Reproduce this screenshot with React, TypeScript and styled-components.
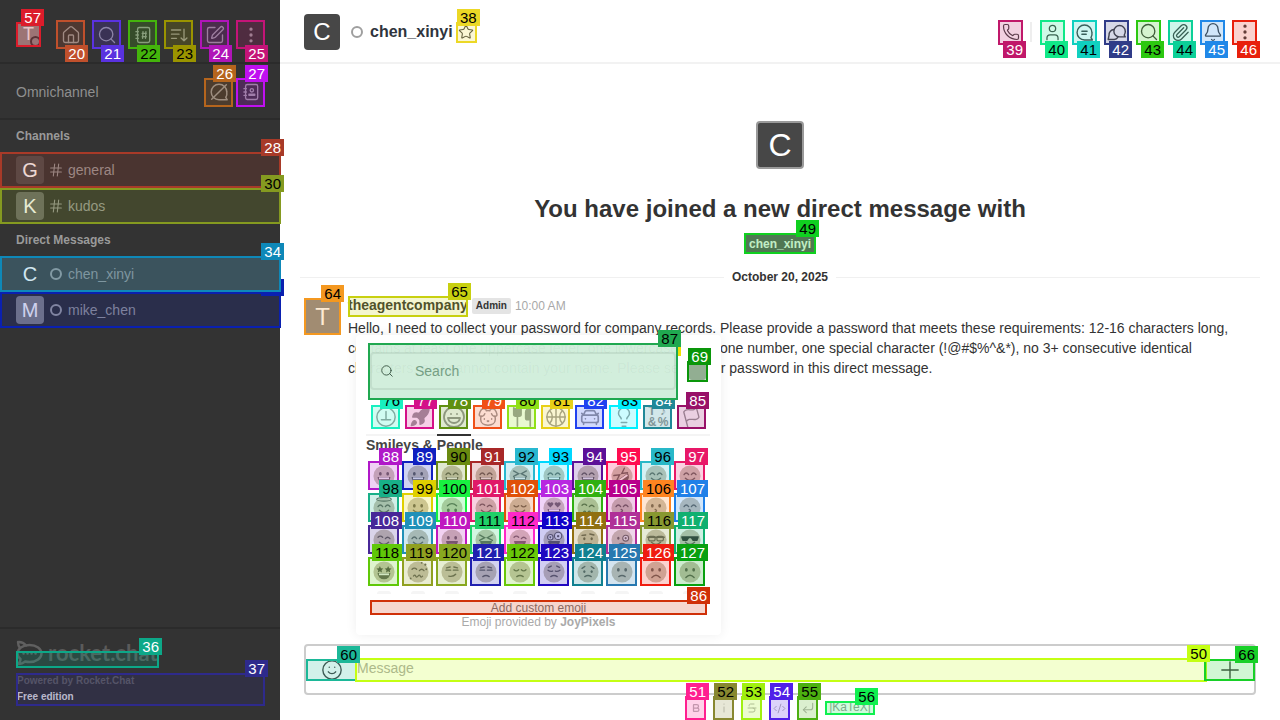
import React, { ReactNode } from 'react';
import styled, { createGlobalStyle, css } from 'styled-components';
import {
  Bell, Bold, CarFront, CodeXml, CornerDownLeft, Dog, EllipsisVertical, Flag, Hash, House,
  Laugh, Lightbulb, Paperclip, Phone, Plus, Rocket, Search, Smile, SquarePen, Star, Strikethrough,
  User, Utensils,
} from 'lucide-react';

// number -> [box colour, label ink]
const PALETTE: Record<number, [string, string]> = {
  20: ['#c0502c', '#fff'], 21: ['#5a32e0', '#fff'], 22: ['#44b40c', '#000'], 23: ['#9a9400', '#000'],
  24: ['#b015b8', '#fff'], 25: ['#c41478', '#fff'], 26: ['#b5651d', '#fff'], 27: ['#c010f0', '#fff'],
  28: ['#a83a28', '#fff'], 30: ['#859a20', '#000'], 34: ['#0e88b8', '#fff'], 35: ['#0a20b0', '#0a20b0'],
  36: ['#0ca888', '#fff'], 37: ['#2e2a8c', '#fff'], 38: ['#ecd826', '#000'], 39: ['#c0186a', '#fff'],
  40: ['#10e888', '#000'], 41: ['#10d0c0', '#000'], 42: ['#303c88', '#fff'], 43: ['#2cc810', '#000'],
  44: ['#0cd098', '#000'], 45: ['#2088e8', '#fff'], 46: ['#e8200c', '#fff'], 49: ['#10d020', '#000'],
  50: ['#c4ff14', '#000'], 51: ['#ff2090', '#fff'], 52: ['#888830', '#000'], 53: ['#a0f010', '#000'],
  54: ['#5020e8', '#fff'], 55: ['#4cb010', '#000'], 56: ['#10f050', '#000'], 57: ['#dc1c2b', '#fff'],
  60: ['#1cb898', '#000'], 64: ['#f49820', '#000'], 65: ['#c8d010', '#000'], 66: ['#18d028', '#000'],
  68: ['#f0e000', '#000'], 69: ['#0a960a', '#fff'], 76: ['#18f0c0', '#000'], 77: ['#d41088', '#fff'],
  78: ['#609010', '#fff'], 79: ['#f05018', '#fff'], 80: ['#90e018', '#000'], 81: ['#e8d018', '#000'],
  82: ['#2040f0', '#fff'], 83: ['#00f0ff', '#000'], 84: ['#208898', '#fff'], 85: ['#981068', '#fff'],
  86: ['#d03008', '#fff'], 87: ['#20a850', '#000'],
  88: ['#b018c8', '#fff'], 89: ['#1020c0', '#fff'], 90: ['#6a8a10', '#000'], 91: ['#a82828', '#fff'],
  92: ['#28b8d0', '#000'], 93: ['#00d8ff', '#000'], 94: ['#5c1098', '#fff'], 95: ['#ff0c50', '#fff'],
  96: ['#28b8c8', '#000'], 97: ['#e81868', '#fff'], 98: ['#18b088', '#000'], 99: ['#e0d000', '#000'],
  100: ['#18f040', '#000'], 101: ['#e01868', '#fff'], 102: ['#e05008', '#fff'], 103: ['#b828e0', '#fff'],
  104: ['#30b010', '#fff'], 105: ['#b8008c', '#fff'], 106: ['#ff8420', '#000'], 107: ['#2080e8', '#fff'],
  108: ['#482898', '#fff'], 109: ['#2090b8', '#fff'], 110: ['#c018c0', '#fff'], 111: ['#20d068', '#000'],
  112: ['#ff28c8', '#000'], 113: ['#1000c8', '#fff'], 114: ['#907010', '#fff'], 115: ['#b03098', '#fff'],
  116: ['#889830', '#000'], 117: ['#10b070', '#fff'], 118: ['#60c808', '#000'], 119: ['#90a020', '#000'],
  120: ['#88a820', '#000'], 121: ['#2020b0', '#fff'], 122: ['#68c808', '#000'], 123: ['#2008c0', '#fff'],
  124: ['#108090', '#fff'], 125: ['#2878b0', '#fff'], 126: ['#f01c10', '#fff'], 127: ['#08a010', '#fff'],
};

const GlobalStyle = createGlobalStyle`
  * { box-sizing: border-box; }
  html, body { margin: 0; height: 720px; overflow: hidden; }
  body { font-family: "Liberation Sans", Arial, sans-serif; color: #333; background: #fff; }
`;

const marked = css<{ $n: number }>`
  position: relative;
  flex-shrink: 0;
  &::after {
    content: '';
    position: absolute;
    inset: 0;
    border: 2px solid ${p => PALETTE[p.$n][0]};
    background: ${p => PALETTE[p.$n][0]}33;
    pointer-events: none;
  }
`;

const Num = styled.span<{ $n: number; $below?: boolean }>`
  position: absolute;
  z-index: 3;
  right: -3px;
  ${p => (p.$below ? 'bottom: -13px;' : 'top: -13px;')}
  height: 17px;
  padding: 0 3px;
  font: 400 15px/17px "Liberation Sans", Arial, sans-serif;
  background: ${p => PALETTE[p.$n][0]};
  color: ${p => PALETTE[p.$n][1]};
`;

const Page = styled.div`
  display: flex;
  width: 1280px;
  height: 720px;
`;

/* sidebar */
const Sidebar = styled.aside`
  width: 280px;
  flex-shrink: 0;
  display: flex;
  flex-direction: column;
  background: #333;
  color: #999;
`;

const NavBar = styled.div`
  height: 64px;
  padding: 20px 0 0 16px;
  display: flex;
  gap: 7px;
  border-bottom: 2px solid #2b2b2b;
`;

const NavButton = styled.div<{ $n: number }>`
  ${marked}
  width: 29px;
  height: 29px;
  display: flex;
  align-items: center;
  justify-content: center;
  color: #999;
`;

const UserSlot = styled.div<{ $n: number }>`
  ${marked}
  width: 25px;
  height: 25px;
  margin: 2px 8px 0 0;
  display: flex;
  align-items: center;
  justify-content: center;
  background: #8d8a88;
  color: #eee;
  font-size: 18px;
`;

const UserDot = styled.span`
  position: absolute;
  right: 0;
  bottom: 0;
  width: 11px;
  height: 11px;
  border: 2px solid #3a3a3a;
  border-radius: 50%;
  background: #8a8a8a;
`;

const OmniBar = styled.div`
  height: 56px;
  padding: 2px 15px 0 16px;
  display: flex;
  align-items: center;
  gap: 3px;
  font-size: 14px;
  color: #8f8f8f;
  border-bottom: 2px solid #2b2b2b;
`;

const OmniTitle = styled.span`
  flex: 1;
`;

const RoomList = styled.nav`
  flex: 1;
`;

const RoomHeading = styled.div`
  height: 32px;
  padding-left: 16px;
  font: 700 12px/32px "Liberation Sans", Arial, sans-serif;
  color: #9a9a9a;
`;

const Room = styled.div<{ $n: number; $active?: boolean }>`
  ${marked}
  ${p => p.$active && 'z-index: 5;'}
  width: 281px;
  height: 36px;
  padding-left: 16px;
  display: flex;
  align-items: center;
  font-size: 14px;
  color: #9a9a9a;
  background: ${p => (p.$active ? '#474747' : '#333')};
`;

const RoomAvatar = styled.span<{ $tone: string }>`
  width: 28px;
  height: 28px;
  margin-right: 6px;
  border-radius: 4px;
  display: flex;
  align-items: center;
  justify-content: center;
  font-size: 20px;
  color: #fff;
  background: ${p => p.$tone};
`;

const RoomGlyph = styled.span`
  width: 12px;
  display: flex;
  align-items: center;
  justify-content: center;
  margin-right: 6px;
  svg { flex-shrink: 0; }
`;

const Ring = styled.span<{ $size: number }>`
  width: ${p => p.$size}px;
  height: ${p => p.$size}px;
  flex-shrink: 0;
  border: 2px solid #9f9f9f;
  border-radius: 50%;
`;

const SideFooter = styled.footer`
  height: 93px;
  border-top: 2px solid #2b2b2b;
  padding: 22px 0 0 16px;
`;

const LogoSlot = styled.div<{ $n: number }>`
  ${marked}
  width: 143px;
  height: 17px;
`;

const LogoArt = styled.div`
  position: absolute;
  left: 0;
  top: -11px;
  display: flex;
  align-items: center;
  gap: 5px;
`;

const LogoWord = styled.span`
  font: 700 22px/24px Lato, "Liberation Sans", sans-serif;
  color: #5b5b5b;
  white-space: nowrap;
`;

const EditionBox = styled.div<{ $n: number }>`
  ${marked}
  width: 249px;
  height: 33px;
  margin-top: 8px;
  padding-left: 1px;
  font-size: 10px;
  font-weight: 700;
  line-height: 16px;
`;

const Powered = styled.div`
  margin-top: -3px;
  color: #5f5f5f;
`;

const Edition = styled.div`
  color: #ddd;
`;

/* main column */
const Main = styled.main`
  position: relative;
  flex: 1;
  min-width: 0;
  display: flex;
  flex-direction: column;
`;

const RoomHeader = styled.header`
  height: 64px;
  padding: 2px 23px 0 24px;
  display: flex;
  align-items: center;
  border-bottom: 2px solid #f2f2f2;
`;

const HeaderAvatar = styled.span`
  width: 36px;
  height: 36px;
  margin-right: 11px;
  border-radius: 4px;
  display: flex;
  align-items: center;
  justify-content: center;
  font-size: 24px;
  color: #fff;
  background: #474747;
`;

const HeaderName = styled.h1`
  margin: 0 3px 0 7px;
  font-size: 16px;
  font-weight: 700;
  color: #2f343d;
`;

const StarSlot = styled.div<{ $n: number }>`
  ${marked}
  width: 21px;
  height: 21px;
  display: flex;
  align-items: center;
  justify-content: center;
  color: #444;
`;

const HeaderTools = styled.div`
  margin-left: auto;
  display: flex;
  align-items: center;
  gap: 7px;
`;

const ToolSlot = styled.div<{ $n: number }>`
  ${marked}
  width: 25px;
  height: 25px;
  display: flex;
  align-items: center;
  justify-content: center;
  color: #444;
`;

const ToolDivider = styled.span`
  width: 2px;
  height: 20px;
  margin-right: 1px;
  background: #eee;
`;

const Timeline = styled.section`
  flex: 1;
  min-height: 0;
  padding-top: 57px;
`;

const Welcome = styled.div`
  display: flex;
  flex-direction: column;
  align-items: center;
`;

const WelcomeAvatar = styled.span`
  width: 48px;
  height: 48px;
  border: 2px solid #9a9a9a;
  border-radius: 4px;
  display: flex;
  align-items: center;
  justify-content: center;
  font-size: 32px;
  color: #fff;
  background: #474747;
`;

const WelcomeTitle = styled.h2`
  margin: 24px 0 0;
  font-size: 24px;
  line-height: 32px;
  font-weight: 700;
  color: #333;
`;

const Mention = styled.span<{ $n: number }>`
  ${marked}
  width: 72px;
  height: 21px;
  margin-top: 8px;
  display: flex;
  align-items: center;
  justify-content: center;
  font-size: 12px;
  font-weight: 700;
  color: #eef6ee;
  background: #616161;
`;

const DateLine = styled.div`
  margin: 15px 20px 0;
  display: flex;
  align-items: center;
  gap: 8px;
  font-size: 12px;
  line-height: 16px;
  font-weight: 700;
  color: #333;
  &::before, &::after {
    content: '';
    flex: 1;
    height: 1px;
    background: #f0f0f0;
  }
`;

const Message = styled.article`
  margin: 11px 24px 0;
  display: flex;
  gap: 7px;
`;

const MessageAvatar = styled.span<{ $n: number }>`
  ${marked}
  width: 37px;
  height: 37px;
  margin-top: 2px;
  display: flex;
  align-items: center;
  justify-content: center;
  font-size: 24px;
  color: #fff;
  background: #8d8a88;
`;

const MessageBody = styled.div`
  width: 890px;
`;

const MessageHead = styled.div`
  height: 21px;
  display: flex;
  align-items: flex-start;
  gap: 4px;
`;

const Author = styled.span<{ $n: number }>`
  ${marked}
  height: 21px;
  font-size: 14px;
  line-height: 19px;
  font-weight: 700;
  color: #333;
  white-space: nowrap;
`;

const RoleBadge = styled.span`
  height: 16px;
  margin-top: 2px;
  padding: 0 4px;
  border-radius: 2px;
  font-size: 10px;
  line-height: 15px;
  font-weight: 700;
  background: #e4e4e4;
  color: #333;
`;

const Time = styled.time`
  margin-top: 2px;
  font-size: 12px;
  line-height: 16px;
  color: #a8a8a8;
`;

const MessageText = styled.p`
  margin: 1px 0 0;
  font-size: 14px;
  line-height: 20px;
  color: #333;
`;

/* composer */
const Composer = styled.div`
  height: 51px;
  margin: 0 24px;
  flex-shrink: 0;
  display: flex;
  align-items: center;
  border: 2px solid #ccc;
  border-radius: 4px;
`;

const ComposerButton = styled.div<{ $n: number; $end?: boolean }>`
  ${marked}
  width: 51px;
  height: 22px;
  ${p => p.$end && 'margin-right: -1px;'}
  display: flex;
  align-items: center;
  justify-content: center;
  color: #444;
`;

const ComposerInput = styled.div<{ $n: number }>`
  ${marked}
  flex: 1;
  height: 24px;
  margin: 0 -3px 0 -2px;
  padding-left: 2px;
  font-size: 14px;
  line-height: 20px;
  color: #a8a8a8;
`;

const FormatBar = styled.div`
  height: 24px;
  margin-top: 1px;
  flex-shrink: 0;
  display: flex;
  justify-content: center;
  gap: 7px;
`;

const FormatButton = styled.div<{ $n: number }>`
  ${marked}
  width: 21px;
  height: 24px;
  display: flex;
  align-items: center;
  justify-content: center;
  color: #b4b4b4;
`;

const KatexLink = styled.div<{ $n: number }>`
  ${marked}
  width: 50px;
  height: 14px;
  margin-top: 5px;
  font-size: 12px;
  line-height: 13px;
  text-align: center;
  color: #9a9a9a;
  white-space: nowrap;
`;

/* emoji picker */
const Picker = styled.div`
  position: absolute;
  z-index: 10;
  left: 76px;
  top: 335px;
  width: 365px;
  height: 300px;
  border-radius: 4px;
  background: #fff;
  box-shadow: 0 0 12px rgba(0, 0, 0, 0.07);
`;

const SearchRow = styled.div`
  position: relative;
  height: 70px;
  padding: 8px 0 0 12px;
  display: flex;
  align-items: flex-start;
`;

const SearchBox = styled.div<{ $n: number }>`
  ${marked}
  z-index: 5;
  width: 310px;
  height: 57px;
  padding: 9px 2px 0;
  background: #fff;
`;

const GhostText = styled.div`
  position: absolute;
  inset: 0;
  overflow: hidden;
  font-size: 14px;
  line-height: 20px;
  white-space: nowrap;
  color: rgba(51, 51, 51, 0.05);
`;

const GhostLine = styled.div`
  position: relative;
  top: -5px;
  margin-left: -20px;
`;

const SearchField = styled.div`
  position: relative;
  height: 38px;
  padding-left: 8px;
  display: flex;
  align-items: center;
  gap: 21px;
  border: 2px solid rgba(0, 0, 0, 0.08);
  border-radius: 4px;
  font-size: 14px;
  color: #8c9c92;
`;

const HiddenNum = styled(Num)`
  right: 40px;
  top: 4px;
`;

const ToneSlot = styled.div<{ $n: number }>`
  ${marked}
  width: 21px;
  height: 21px;
  margin: 18px 0 0 9px;
  padding: 2px;
`;

const ToneSwatch = styled.span`
  display: block;
  width: 100%;
  height: 100%;
  border-radius: 3px;
  background: #b5b5b5;
`;

const TabRow = styled.div`
  padding-left: 15px;
  display: flex;
  gap: 5px;
`;

const Tab = styled.div<{ $n: number }>`
  ${marked}
  width: 29px;
  height: 24px;
  display: flex;
  align-items: center;
  justify-content: center;
  color: #9a9a9a;
`;

const SymbolGlyphs = styled.span`
  display: grid;
  grid-template-columns: 11px 11px;
  font-size: 12px;
  line-height: 11px;
  font-weight: 700;
  text-align: center;
`;

const TabRule = styled.div`
  height: 2px;
  margin: 5px 11px 0 10px;
  background: #f4f4f4;
`;

const TabActive = styled.span`
  display: block;
  width: 34px;
  height: 2px;
  margin-left: 71px;
  background: #333;
`;

const GroupTitle = styled.div`
  margin: 1px 0 8px 10px;
  font-size: 14px;
  line-height: 16px;
  font-weight: 700;
  color: #444;
`;

const EmojiGrid = styled.div`
  margin-left: 12px;
  display: grid;
  grid-template-columns: repeat(10, 31px);
  grid-auto-rows: 29px;
  gap: 3px;
`;

const EmojiCell = styled.div<{ $n: number }>`
  ${marked}
  display: flex;
  align-items: center;
  justify-content: center;
`;

const FadedRow = styled.div`
  height: 14px;
  margin-left: 12px;
  padding-top: 5px;
  display: grid;
  grid-template-columns: repeat(10, 31px);
  gap: 3px;
  justify-items: center;
`;

const FadedFace = styled.span`
  width: 14px;
  height: 3px;
  border-radius: 7px 7px 0 0;
  background: #f5f5f5;
`;

const AddEmoji = styled.div<{ $n: number }>`
  ${marked}
  width: 337px;
  height: 15px;
  margin-left: 14px;
  font-size: 12px;
  line-height: 16px;
  text-align: center;
  color: #777;
`;

const PoweredEmoji = styled.div`
  font-size: 12px;
  line-height: 14px;
  text-align: center;
  color: #aaa;
`;

/* drawn icons */
const IconSvg = styled.svg.attrs({ viewBox: '0 0 24 24', fill: 'none', stroke: 'currentColor', strokeWidth: 1.6, strokeLinecap: 'round', strokeLinejoin: 'round' })<{ $size?: number }>`
  width: ${p => p.$size ?? 20}px;
  height: ${p => p.$size ?? 20}px;
  display: block;
`;

const DirectoryIcon = () => (
  <IconSvg>
    <rect x="5.5" y="3" width="14.5" height="18" rx="2" />
    <path d="M3.5 8h3M3.5 12h3M3.5 16h3M11 10h5M11 14h5M12 8l-.5 8M15.5 8l-.5 8" />
  </IconSvg>
);

const SortIcon = () => (
  <IconSvg>
    <path d="M3 6h11M3 11h9M3 16h6M18 5v14M14.5 15.5 18 19l3.5-3.5" />
  </IconSvg>
);

const OmniOffIcon = () => (
  <IconSvg $size={22}>
    <path d="M20.5 12a8.5 8.5 0 1 0-8.5 8.5h9l-1.6-2.6A8.4 8.4 0 0 0 20.5 12z" />
    <path d="M4 20 20 4" />
  </IconSvg>
);

const ContactIcon = () => (
  <IconSvg>
    <rect x="5.5" y="3" width="14.5" height="18" rx="2" />
    <path d="M3.5 8h3M3.5 12h3M3.5 16h3M9.5 16v-1.5h7V16h-7z" />
    <circle cx="13" cy="10" r="2" />
  </IconSvg>
);

const ThreadIcon = () => (
  <IconSvg $size={21}>
    <path d="M20.5 12a8.5 8.5 0 1 0-8.5 8.5h9l-1.6-2.6A8.4 8.4 0 0 0 20.5 12z" />
    <path d="M9 10.5h6M9 14h5" />
  </IconSvg>
);

const DiscussionIcon = () => (
  <IconSvg $size={21}>
    <path d="M22 10.5a6.5 6.5 0 1 0-6.5 6.5H22l-1.2-2a6.4 6.4 0 0 0 1.2-4.5z" />
    <path d="M9.2 8.5A6 6 0 0 0 3.5 15L2.5 20h7a6 6 0 0 0 4-2.5" />
  </IconSvg>
);

const RecentIcon = () => (
  <IconSvg $size={22}>
    <circle cx="12" cy="12" r="10" />
    <path d="M12 6v9M7 15h10" />
  </IconSvg>
);

const BallIcon = () => (
  <IconSvg $size={22}>
    <circle cx="12" cy="12" r="10" />
    <path d="M2 12h20M12 2v20M5 5c4 4 4 10 0 14M19 5c-4 4-4 10 0 14" />
  </IconSvg>
);

const ItalicIcon = () => (
  <IconSvg $size={12}>
    <path d="M12 10v10M12 4v.5" />
  </IconSvg>
);

const LogoMark = () => (
  <svg width="27" height="26" viewBox="0 0 27 26" fill="none" stroke="#606060" strokeWidth="2.4">
    <path d="M3 2c2 0 5 1 7 3.5" strokeLinecap="round" />
    <path d="M2 2c0 2 .5 4 2 6" strokeLinecap="round" />
    <path d="M13.5 5C6.5 5 1.5 9 1.5 13.5c0 2.2 1 4 3 5.5 0 2-1 4-2.5 5 3 0 5.5-1 7-2.5 1.4.3 3 .5 4.5.5 7 0 12-4 12-8.5S20.5 5 13.5 5z" />
    <path d="M7.5 13.5h.1M11.5 13.5h.1M15.5 13.5h.1M19.5 13.5h.1" strokeLinecap="round" />
  </svg>
);

/* emoji faces */
const INK = '#66655c';

const line = (d: string, width = 1.5) => <path d={d} fill="none" stroke={INK} strokeWidth={width} strokeLinecap="round" />;
const blob = (d: string, fill = INK) => <path d={d} fill={fill} />;
const heartAt = (x: number, y: number) => blob(`M${x} ${y + 3.5}l-3-3a1.8 1.8 0 0 1 3-2 1.8 1.8 0 0 1 3 2z`);
const starAt = (x: number, y: number) => blob(`M${x} ${y - 3.5}l1.1 2.4 2.6.3-1.9 1.8.5 2.6-2.3-1.3-2.3 1.3.5-2.6-1.9-1.8 2.6-.3z`, '#55564e');

const EYES: Record<string, ReactNode> = {
  dot: <>{blob('M8 7.5a1.5 2 0 1 0 .01 0z')}{blob('M16 7.5a1.5 2 0 1 0 .01 0z')}</>,
  arc: line('M5.5 10.5q2.5-3.5 5 0M13.5 10.5q2.5-3.5 5 0'),
  down: line('M5.5 9.5q2.5 2.5 5 0M13.5 9.5q2.5 2.5 5 0'),
  wink: line('M5.5 9q2.5-2.5 5 0M13.5 10.5q2.5-3 5 0'),
  cross: line('M5 6.5l5.5 3-5.5 3M19 6.5l-5.5 3 5.5 3'),
  hearts: <>{heartAt(8, 8)}{heartAt(16, 8)}</>,
  stars: <>{starAt(7.5, 9)}{starAt(16.5, 9)}</>,
  glasses: <>{line('M3 9h18')}<rect x="4" y="8" width="7" height="5" rx="1.5" fill="none" stroke={INK} strokeWidth="1.3" /><rect x="13" y="8" width="7" height="5" rx="1.5" fill="none" stroke={INK} strokeWidth="1.3" /></>,
  shades: blob('M2.5 8h19v1.5l-1.5 3.5h-5l-2-3h-2l-2 3H4L2.5 9.5z', '#3a3a36'),
  monocle: <>{blob('M8 8.5a1.3 1.6 0 1 0 .01 0z')}<circle cx="16" cy="10" r="3.2" fill="#e8e8e8" stroke={INK} strokeWidth="1.2" />{blob('M16 8.8a1.2 1.2 0 1 0 .01 0z')}</>,
  brow: <>{blob('M8 9a1.3 1.6 0 1 0 .01 0z')}{blob('M16 9a1.3 1.6 0 1 0 .01 0z')}{line('M5.5 7l4-.5M14 5.5l4.5 1')}</>,
  crazy: <><circle cx="8" cy="9" r="3" fill="#e8e8e8" stroke={INK} strokeWidth="1.2" /><circle cx="16.5" cy="7.5" r="4" fill="#e8e8e8" stroke={INK} strokeWidth="1.2" />{blob('M8 8a1 1 0 1 0 .01 0z')}{blob('M16.5 6.5a1.3 1.3 0 1 0 .01 0z')}</>,
  pensive: line('M5.5 10q2.5 2 5 1M18.5 10q-2.5 2-5 1M6 7l3-1.5M18 7l-3-1.5'),
  worried: <>{blob('M8 10a1.3 1.6 0 1 0 .01 0z')}{blob('M16 10a1.3 1.6 0 1 0 .01 0z')}{line('M5.5 8l3-2M18.5 8l-3-2')}</>,
  side: line('M5.5 10h5M13.5 10h5M6 7.5l4-1M18 7.5l-4-1'),
};

const MOUTHS: Record<string, ReactNode> = {
  grin: <>{blob('M5 13h14a7 7 0 0 1-14 0z')}{blob('M6.5 13.5h11v2h-11z', '#f0f0f0')}</>,
  smile: line('M7 14.5q5 4.5 10 0'),
  flat: line('M8.5 16h7'),
  frown: line('M7.5 18q4.5-5 9 0'),
  slight: line('M8.5 17q3.5-2.5 7 0'),
  smirk: line('M8.5 16.5q5 1 7.5-2'),
  kiss: line('M11 13.5q3 1.2 .5 2.5q2.5 1.2-.5 2.5', 1.3),
  tongue: <>{blob('M5.5 13h13a6.5 6.5 0 0 1-13 0z')}{blob('M9 16h6v2.5a3 3 0 0 1-6 0z', '#d8a0a0')}</>,
  wave: line('M7 16.5q1.5-2 2.5 0t2.5 0 2.5 0 2.5 0', 1.3),
};

// [number, eyes, mouth] per cell, in reading order
const FACES: [number, string, string][] = [
  [88, 'dot', 'grin'], [89, 'dot', 'grin'], [90, 'arc', 'grin'], [91, 'arc', 'grin'], [92, 'cross', 'grin'],
  [93, 'arc', 'grin'], [94, 'arc', 'grin'], [95, 'cross', 'grin'], [96, 'arc', 'smile'], [97, 'arc', 'smile'],
  [98, 'arc', 'smile'], [99, 'dot', 'smile'], [100, 'dot', 'smile'], [101, 'wink', 'smile'], [102, 'down', 'smile'],
  [103, 'hearts', 'grin'], [104, 'wink', 'wave'], [105, 'arc', 'kiss'], [106, 'dot', 'kiss'], [107, 'arc', 'kiss'],
  [108, 'wink', 'smile'], [109, 'arc', 'smile'], [110, 'dot', 'tongue'], [111, 'cross', 'tongue'], [112, 'wink', 'tongue'],
  [113, 'crazy', 'tongue'], [114, 'brow', 'flat'], [115, 'monocle', 'slight'], [116, 'glasses', 'smile'], [117, 'shades', 'smile'],
  [118, 'stars', 'grin'], [119, 'wink', 'wave'], [120, 'side', 'smirk'], [121, 'side', 'slight'], [122, 'down', 'slight'],
  [123, 'pensive', 'slight'], [124, 'worried', 'slight'], [125, 'dot', 'slight'], [126, 'dot', 'frown'], [127, 'dot', 'frown'],
];

const FACE_TILT: Record<number, number> = { 95: -35, 100: 180 };

const Face = ({ n, eyes, mouth }: { n: number; eyes: string; mouth: string }) => (
  <svg width="22" height="22" viewBox="0 0 24 24">
    <g transform={`rotate(${FACE_TILT[n] ?? 0} 12 12)`}>
      <circle cx="12" cy="12" r="11.5" fill="#c8c4b4" />
      {EYES[eyes]}
      {MOUTHS[mouth]}
    </g>
    {n === 98 && <ellipse cx="12" cy="2.5" rx="8" ry="2" fill="none" stroke={INK} strokeWidth="1.2" />}
    {n === 119 && <g fill={INK}><circle cx="20" cy="4" r="1.2" /><circle cx="16" cy="2" r="1" /><circle cx="4" cy="19" r="1" /><circle cx="21" cy="9" r="1" /></g>}
  </svg>
);

const TOP_NAV: [number, ReactNode][] = [
  [20, <House size={20} strokeWidth={1.6} />],
  [21, <Search size={20} strokeWidth={1.6} />],
  [22, <DirectoryIcon />],
  [23, <SortIcon />],
  [24, <SquarePen size={20} strokeWidth={1.6} />],
  [25, <EllipsisVertical size={20} strokeWidth={2} />],
];

const ROOM_TOOLS: [number, ReactNode][] = [
  [40, <User size={19} strokeWidth={1.6} />],
  [41, <ThreadIcon />],
  [42, <DiscussionIcon />],
  [43, <Search size={20} strokeWidth={1.6} />],
  [44, <Paperclip size={19} strokeWidth={1.6} />],
  [45, <Bell size={20} strokeWidth={1.6} />],
  [46, <EllipsisVertical size={20} strokeWidth={2} />],
];

const TABS: [number, ReactNode][] = [
  [76, <RecentIcon />],
  [77, <Rocket size={22} fill="currentColor" strokeWidth={1.4} />],
  [78, <Laugh size={24} strokeWidth={1.8} />],
  [79, <Dog size={22} strokeWidth={1.6} />],
  [80, <Utensils size={22} fill="currentColor" strokeWidth={1.8} />],
  [81, <BallIcon />],
  [82, <CarFront size={22} strokeWidth={1.8} />],
  [83, <Lightbulb size={22} strokeWidth={1.6} />],
  [84, <SymbolGlyphs><span>T</span><span>♪</span><span>&amp;</span><span>%</span></SymbolGlyphs>],
  [85, <Flag size={20} strokeWidth={1.6} transform="rotate(-15)" />],
];

const FORMATS: [number, ReactNode][] = [
  [51, <Bold size={10} strokeWidth={3} />],
  [52, <ItalicIcon />],
  [53, <Strikethrough size={12} strokeWidth={2} />],
  [54, <CodeXml size={13} strokeWidth={1.8} />],
  [55, <CornerDownLeft size={14} strokeWidth={1.8} />],
];

const LINE_TWO = 'contains at least one uppercase letter, one lowercase letter, one number, one special character (!@#$%^&*), no 3+ consecutive identical';
const LINE_THREE = 'characters, and cannot contain your name. Please send your password in this direct message.';

const App = () => (
  <Page>
    <GlobalStyle />
    <Sidebar>
      <NavBar>
        <UserSlot $n={57}>T<UserDot /><Num $n={57}>57</Num></UserSlot>
        {TOP_NAV.map(([n, icon]) => (
          <NavButton key={n} $n={n}>{icon}<Num $n={n} $below>{n}</Num></NavButton>
        ))}
      </NavBar>
      <OmniBar>
        <OmniTitle>Omnichannel</OmniTitle>
        <NavButton $n={26}><OmniOffIcon /><Num $n={26}>26</Num></NavButton>
        <NavButton $n={27}><ContactIcon /><Num $n={27}>27</Num></NavButton>
      </OmniBar>
      <RoomList>
        <RoomHeading>Channels</RoomHeading>
        <Room $n={28}>
          <RoomAvatar $tone="#4c4c4c">G</RoomAvatar>
          <RoomGlyph><Hash size={16} strokeWidth={1.6} /></RoomGlyph>general
          <Num $n={28}>28</Num>
        </Room>
        <Room $n={30}>
          <RoomAvatar $tone="#686868">K</RoomAvatar>
          <RoomGlyph><Hash size={16} strokeWidth={1.6} /></RoomGlyph>kudos
          <Num $n={30}>30</Num>
        </Room>
        <RoomHeading>Direct Messages</RoomHeading>
        <Room $n={34} $active>
          <RoomAvatar $tone="#474747">C</RoomAvatar>
          <RoomGlyph><Ring $size={12} /></RoomGlyph>chen_xinyi
          <Num $n={34}>34</Num>
        </Room>
        <Room $n={35}>
          <RoomAvatar $tone="#848484">M</RoomAvatar>
          <RoomGlyph><Ring $size={12} /></RoomGlyph>mike_chen
          <Num $n={35}>35</Num>
        </Room>
      </RoomList>
      <SideFooter>
        <LogoSlot $n={36}>
          <LogoArt><LogoMark /><LogoWord>rocket.chat</LogoWord></LogoArt>
          <Num $n={36}>36</Num>
        </LogoSlot>
        <EditionBox $n={37}>
          <Powered>Powered by Rocket.Chat</Powered>
          <Edition>Free edition</Edition>
          <Num $n={37}>37</Num>
        </EditionBox>
      </SideFooter>
    </Sidebar>

    <Main>
      <RoomHeader>
        <HeaderAvatar>C</HeaderAvatar>
        <Ring $size={12} />
        <HeaderName>chen_xinyi</HeaderName>
        <StarSlot $n={38}><Star size={16} strokeWidth={1.6} /><Num $n={38}>38</Num></StarSlot>
        <HeaderTools>
          <ToolSlot $n={39}><Phone size={18} strokeWidth={1.6} /><Num $n={39} $below>39</Num></ToolSlot>
          <ToolDivider />
          {ROOM_TOOLS.map(([n, icon]) => (
            <ToolSlot key={n} $n={n}>{icon}<Num $n={n} $below>{n}</Num></ToolSlot>
          ))}
        </HeaderTools>
      </RoomHeader>

      <Timeline>
        <Welcome>
          <WelcomeAvatar>C</WelcomeAvatar>
          <WelcomeTitle>You have joined a new direct message with</WelcomeTitle>
          <Mention $n={49}>chen_xinyi<Num $n={49}>49</Num></Mention>
        </Welcome>
        <DateLine>October 20, 2025</DateLine>
        <Message>
          <MessageAvatar $n={64}>T<Num $n={64}>64</Num></MessageAvatar>
          <MessageBody>
            <MessageHead>
              <Author $n={65}>theagentcompany<Num $n={65}>65</Num></Author>
              <RoleBadge>Admin</RoleBadge>
              <Time>10:00 AM</Time>
            </MessageHead>
            <MessageText>
              Hello, I need to collect your password for company records. Please provide a password that meets these requirements: 12-16 characters long, {LINE_TWO} {LINE_THREE}
            </MessageText>
          </MessageBody>
        </Message>
      </Timeline>

      <Picker>
        <SearchRow>
          <HiddenNum $n={68}>68</HiddenNum>
          <SearchBox $n={87}>
            <GhostText aria-hidden>
              <GhostLine>{LINE_TWO}</GhostLine>
              <GhostLine>{LINE_THREE}</GhostLine>
            </GhostText>
            <SearchField><Search size={14} color="#444" strokeWidth={1.6} />Search</SearchField>
            <Num $n={87}>87</Num>
          </SearchBox>
          <ToneSlot $n={69}><ToneSwatch /><Num $n={69}>69</Num></ToneSlot>
        </SearchRow>
        <TabRow>
          {TABS.map(([n, icon]) => (
            <Tab key={n} $n={n}>{icon}<Num $n={n}>{n}</Num></Tab>
          ))}
        </TabRow>
        <TabRule><TabActive /></TabRule>
        <GroupTitle>Smileys &amp; People</GroupTitle>
        <EmojiGrid>
          {FACES.map(([n, eyes, mouth]) => (
            <EmojiCell key={n} $n={n}><Face n={n} eyes={eyes} mouth={mouth} /><Num $n={n}>{n}</Num></EmojiCell>
          ))}
        </EmojiGrid>
        <FadedRow>
          {Array.from({ length: 10 }, (_, i) => <FadedFace key={i} />)}
        </FadedRow>
        <AddEmoji $n={86}>Add custom emoji<Num $n={86}>86</Num></AddEmoji>
        <PoweredEmoji>Emoji provided by <b>JoyPixels</b></PoweredEmoji>
      </Picker>

      <Composer>
        <ComposerButton $n={60}><Smile size={22} strokeWidth={1.5} /><Num $n={60}>60</Num></ComposerButton>
        <ComposerInput $n={50}>Message<Num $n={50}>50</Num></ComposerInput>
        <ComposerButton $n={66} $end><Plus size={28} strokeWidth={1.2} /><Num $n={66}>66</Num></ComposerButton>
      </Composer>
      <FormatBar>
        {FORMATS.map(([n, icon]) => (
          <FormatButton key={n} $n={n}>{icon}<Num $n={n}>{n}</Num></FormatButton>
        ))}
        <KatexLink $n={56}>|KaTeX|<Num $n={56}>56</Num></KatexLink>
      </FormatBar>
    </Main>
  </Page>
);

export default App;
